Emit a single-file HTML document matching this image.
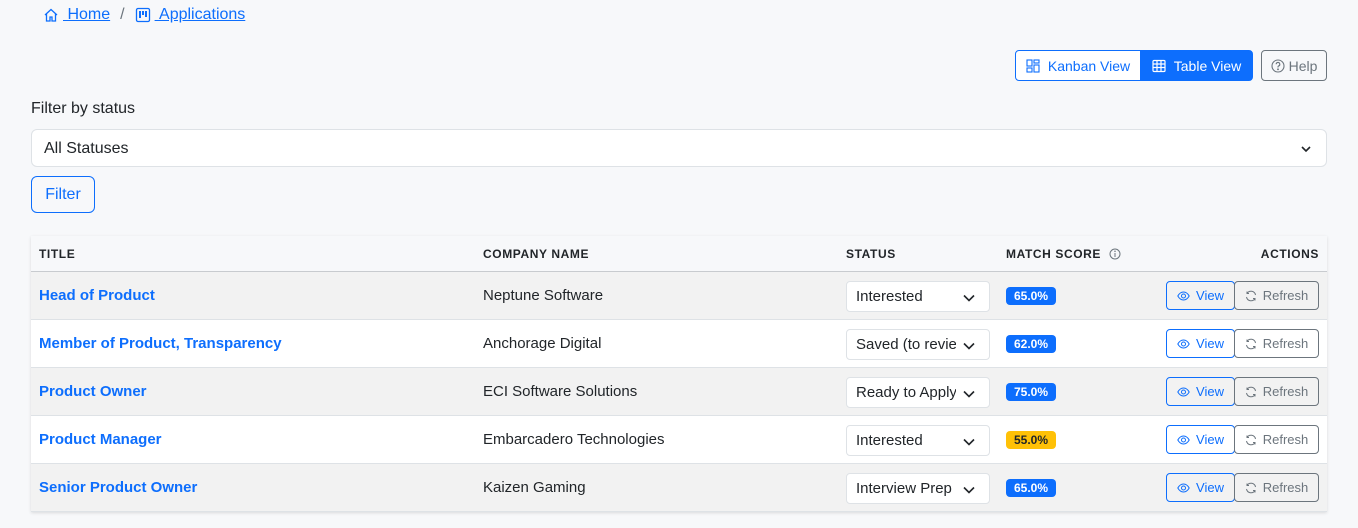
<!DOCTYPE html>
<html><head><meta charset="utf-8"><style>
*{box-sizing:border-box;margin:0;padding:0}
body{width:1358px;height:528px;background:#f7f8fa;font-family:"Liberation Sans",sans-serif;color:#212529;position:relative;overflow:hidden}
.a{position:absolute}
.link{color:#0d6efd;text-decoration:underline;font-size:16px}
.btn{position:absolute;border:1px solid;border-radius:4px;display:flex;align-items:center;justify-content:center;font-size:14px}
.row{position:absolute;left:31px;width:1296px;height:48px;border-bottom:1px solid #dee2e6}
.t{position:absolute;left:8px;top:15px;font-weight:bold;color:#0d6efd;font-size:15px}
.c{position:absolute;left:452px;top:15px;font-size:15px;color:#212529}
.sel{position:absolute;left:815px;top:9px;width:144px;height:31px;background:#fff;border:1px solid #dee2e6;border-radius:4px;font-size:15px}
.sel span{position:absolute;left:9px;top:6px;width:100px;white-space:nowrap;overflow:hidden}
.sel svg{position:absolute;right:14px;top:12px}
.badge{position:absolute;left:975px;top:15px;width:50px;height:18px;border-radius:4px;background:#0d6efd;color:#fff;font-size:12px;font-weight:bold;text-align:center;line-height:18px}
.v{left:1135px;top:9px;width:69px;height:29px;border-color:#0d6efd;color:#0d6efd;font-size:13px;gap:6px}
.r{left:1203px;top:9px;width:85px;height:29px;border-color:#6c757d;color:#6c757d;font-size:13px;gap:6px}
.h{position:absolute;top:11px;font-size:12px;font-weight:bold;letter-spacing:.6px;color:#212529}
</style></head><body>
<div class="a" style="left:43px;top:6px;display:flex;align-items:center;gap:4px;font-size:16px">
<svg width="16" height="16" viewBox="0 0 16 16" fill="none" stroke="#0d6efd" stroke-width="1.3"><path d="M2 8 8 2.5 14 8M3.5 6.8V14h3.5v-4h2v4h3.5V6.8"/></svg>
<span class="link">&nbsp;Home</span><span style="color:#6c757d;margin:0 6px">/</span>
<svg width="16" height="16" viewBox="0 0 16 16"><rect x="1.5" y="1.5" width="13" height="13" rx="1.5" fill="none" stroke="#0d6efd" stroke-width="1.3"/><rect x="4" y="4" width="2" height="7" fill="#0d6efd"/><rect x="7" y="4" width="2" height="4" fill="#0d6efd"/><rect x="10" y="4" width="2" height="6" fill="#0d6efd"/></svg>
<span class="link">&nbsp;Applications</span></div>

<div class="btn" style="left:1015px;top:50px;width:126px;height:31px;border-color:#0d6efd;color:#0d6efd;border-radius:4px 0 0 4px;gap:8px;background:#fff">
<svg width="14" height="14" viewBox="0 0 14 14" fill="none" stroke="#0d6efd" stroke-width="1.1"><rect x="1" y="1" width="5" height="6"/><rect x="8" y="1" width="5" height="3"/><rect x="1" y="9" width="5" height="4"/><rect x="8" y="6" width="5" height="7"/></svg>Kanban View</div>
<div class="btn" style="left:1140px;top:50px;width:113px;height:31px;border-color:#0d6efd;background:#0d6efd;color:#fff;border-radius:0 4px 4px 0;gap:8px">
<svg width="14" height="14" viewBox="0 0 14 14" fill="none" stroke="#fff" stroke-width="1.2"><rect x="1" y="1.5" width="12" height="11" rx="1"/><path d="M1 5h12M1 8.5h12M5 1.5v11M9 1.5v11"/></svg>Table View</div>
<div class="btn" style="left:1261px;top:50px;width:66px;height:31px;border-color:#6c757d;color:#6c757d;gap:4px">
<svg width="14" height="14" viewBox="0 0 14 14" fill="none" stroke="#6c757d" stroke-width="1.1"><circle cx="7" cy="7" r="6"/><path d="M5.2 5.3a1.8 1.8 0 1 1 2.3 1.7c-.4.2-.5.5-.5 1V8.5"/><circle cx="7" cy="10.3" r=".4" fill="#6c757d"/></svg>Help</div>

<div class="a" style="left:31px;top:100px;font-size:16px">Filter by status</div>
<div class="a" style="left:31px;top:129px;width:1296px;height:38px;background:#fff;border:1px solid #dee2e6;border-radius:6px;font-size:16px;padding:10px 0 0 12px">All Statuses
<svg class="a" style="right:14px;top:13px" width="12" height="12" viewBox="0 0 12 12" fill="none" stroke="#212529" stroke-width="1.6"><path d="M2 4l4 4 4-4"/></svg></div>
<div class="btn" style="left:31px;top:176px;width:64px;height:37px;border-color:#0d6efd;color:#0d6efd;font-size:16px;border-radius:6px">Filter</div>

<div class="a" style="left:31px;top:236px;width:1296px;height:276px;box-shadow:0 1px 3px rgba(0,0,0,.12)"></div>
<div class="a" style="left:31px;top:236px;width:1296px;height:36px;background:#f7f8fa;border-bottom:1px solid #c8cbcf">
<span class="h" style="left:8px">TITLE</span><span class="h" style="left:452px">COMPANY NAME</span><span class="h" style="left:815px">STATUS</span>
<span class="h" style="left:975px">MATCH SCORE <svg width="12" height="12" viewBox="0 0 12 12" style="vertical-align:-2px;margin-left:4px" fill="none" stroke="#6c757d"><circle cx="6" cy="6" r="5"/><path d="M6 5v4"/><circle cx="6" cy="3.3" r=".3"/></svg></span>
<span class="h" style="right:8px">ACTIONS</span></div>

<div class="row" style="top:272px;background:#f2f2f2"><span class="t">Head of Product</span><span class="c">Neptune Software</span><div class="sel"><span>Interested</span><svg width="12" height="8" viewBox="0 0 12 8" fill="none" stroke="#212529" stroke-width="1.6"><path d="M1 1.5l5 5 5-5"/></svg></div><div class="badge">65.0%</div><div class="btn v"><svg width="13" height="10" viewBox="0 0 13 10" fill="none" stroke="#0d6efd"><path d="M.8 5C2.5 2 4.5 1 6.5 1s4 1 5.7 4c-1.7 3-3.7 4-5.7 4S2.5 8 .8 5z"/><circle cx="6.5" cy="5" r="2"/></svg>View</div><div class="btn r"><svg width="12" height="12" viewBox="0 0 12 12" fill="none" stroke="#6c757d"><path d="M10.5 5A4.6 4.6 0 0 0 2 3.5M1.5 7A4.6 4.6 0 0 0 10 8.5"/><path d="M2 1.5v2h2M10 10.5v-2H8"/></svg>Refresh</div></div>

<div class="row" style="top:320px;background:#fff"><span class="t">Member of Product, Transparency</span><span class="c">Anchorage Digital</span><div class="sel"><span>Saved (to review)</span><svg width="12" height="8" viewBox="0 0 12 8" fill="none" stroke="#212529" stroke-width="1.6"><path d="M1 1.5l5 5 5-5"/></svg></div><div class="badge">62.0%</div><div class="btn v"><svg width="13" height="10" viewBox="0 0 13 10" fill="none" stroke="#0d6efd"><path d="M.8 5C2.5 2 4.5 1 6.5 1s4 1 5.7 4c-1.7 3-3.7 4-5.7 4S2.5 8 .8 5z"/><circle cx="6.5" cy="5" r="2"/></svg>View</div><div class="btn r"><svg width="12" height="12" viewBox="0 0 12 12" fill="none" stroke="#6c757d"><path d="M10.5 5A4.6 4.6 0 0 0 2 3.5M1.5 7A4.6 4.6 0 0 0 10 8.5"/><path d="M2 1.5v2h2M10 10.5v-2H8"/></svg>Refresh</div></div>

<div class="row" style="top:368px;background:#f2f2f2"><span class="t">Product Owner</span><span class="c">ECI Software Solutions</span><div class="sel"><span>Ready to Apply</span><svg width="12" height="8" viewBox="0 0 12 8" fill="none" stroke="#212529" stroke-width="1.6"><path d="M1 1.5l5 5 5-5"/></svg></div><div class="badge">75.0%</div><div class="btn v"><svg width="13" height="10" viewBox="0 0 13 10" fill="none" stroke="#0d6efd"><path d="M.8 5C2.5 2 4.5 1 6.5 1s4 1 5.7 4c-1.7 3-3.7 4-5.7 4S2.5 8 .8 5z"/><circle cx="6.5" cy="5" r="2"/></svg>View</div><div class="btn r"><svg width="12" height="12" viewBox="0 0 12 12" fill="none" stroke="#6c757d"><path d="M10.5 5A4.6 4.6 0 0 0 2 3.5M1.5 7A4.6 4.6 0 0 0 10 8.5"/><path d="M2 1.5v2h2M10 10.5v-2H8"/></svg>Refresh</div></div>

<div class="row" style="top:416px;background:#fff"><span class="t">Product Manager</span><span class="c">Embarcadero Technologies</span><div class="sel"><span>Interested</span><svg width="12" height="8" viewBox="0 0 12 8" fill="none" stroke="#212529" stroke-width="1.6"><path d="M1 1.5l5 5 5-5"/></svg></div><div class="badge" style="background:#ffc107;color:#212529">55.0%</div><div class="btn v"><svg width="13" height="10" viewBox="0 0 13 10" fill="none" stroke="#0d6efd"><path d="M.8 5C2.5 2 4.5 1 6.5 1s4 1 5.7 4c-1.7 3-3.7 4-5.7 4S2.5 8 .8 5z"/><circle cx="6.5" cy="5" r="2"/></svg>View</div><div class="btn r"><svg width="12" height="12" viewBox="0 0 12 12" fill="none" stroke="#6c757d"><path d="M10.5 5A4.6 4.6 0 0 0 2 3.5M1.5 7A4.6 4.6 0 0 0 10 8.5"/><path d="M2 1.5v2h2M10 10.5v-2H8"/></svg>Refresh</div></div>

<div class="row" style="top:464px;background:#f2f2f2"><span class="t">Senior Product Owner</span><span class="c">Kaizen Gaming</span><div class="sel"><span>Interview Prep</span><svg width="12" height="8" viewBox="0 0 12 8" fill="none" stroke="#212529" stroke-width="1.6"><path d="M1 1.5l5 5 5-5"/></svg></div><div class="badge">65.0%</div><div class="btn v"><svg width="13" height="10" viewBox="0 0 13 10" fill="none" stroke="#0d6efd"><path d="M.8 5C2.5 2 4.5 1 6.5 1s4 1 5.7 4c-1.7 3-3.7 4-5.7 4S2.5 8 .8 5z"/><circle cx="6.5" cy="5" r="2"/></svg>View</div><div class="btn r"><svg width="12" height="12" viewBox="0 0 12 12" fill="none" stroke="#6c757d"><path d="M10.5 5A4.6 4.6 0 0 0 2 3.5M1.5 7A4.6 4.6 0 0 0 10 8.5"/><path d="M2 1.5v2h2M10 10.5v-2H8"/></svg>Refresh</div></div>
</body></html>
